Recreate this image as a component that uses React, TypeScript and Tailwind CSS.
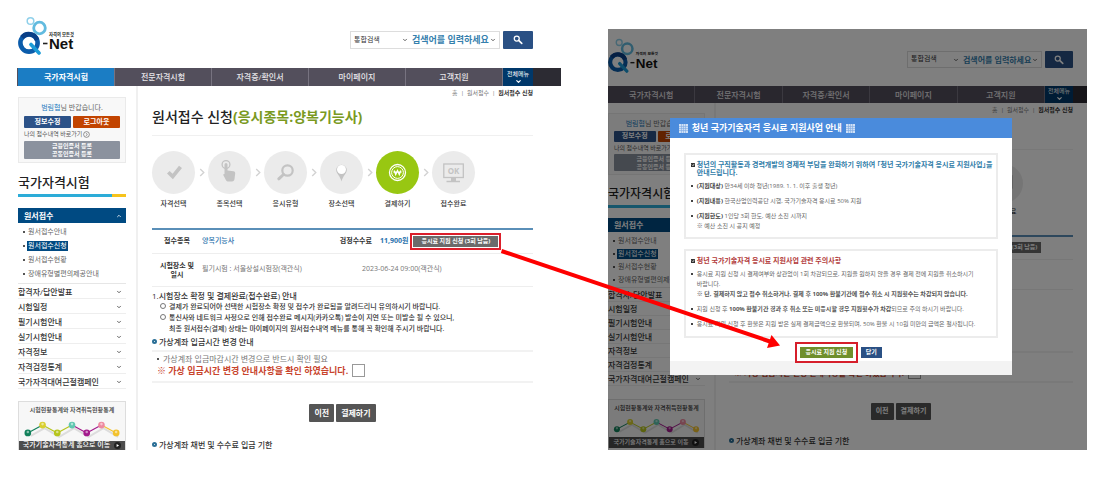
import type { ReactNode } from "react";
import { ChevronDown, ChevronUp } from "lucide-react";

const regular = {
  header: "h-[68px] pt-4 pr-7 pl-px",
  logo: "h-[39px] w-[58px]",
  search: "mt-[15px] h-[18px]",
  searchBox: "w-[150px]",
  searchSelect: "w-[54px]",
  searchInput: "text-[9px]",
  searchButton: "w-[30px]",
  nav: "h-[18px] pl-px",
  navAll: "w-[30px]",
  navRest: "w-7",
  body: "grid-cols-[121px_1fr]",
  side: "pl-px pr-[10px] pt-[11px]",
  userBox: "h-[66px] px-[5px] pt-[3px]",
  userName: "h-[15px] text-[7px]",
  userButtons: "h-3",
  userLink: "h-[13px]",
  cert: "h-[18px]",
  sideTitle: "mt-2 h-[23px] text-[13px]",
  menuHead: "mt-[11px] h-[15px]",
  subMenu: "py-[2px]",
  subItem: "h-[14px]",
  menuItem: "h-[15px] text-[8px]",
  banner: "mt-[12px]",
  bannerText: "h-[17px]",
  bannerChart: "h-[22px]",
  bannerBar: "h-[9px] text-[7px]",
  main: "pl-[14px] pr-7",
  crumb: "h-[14px]",
  title: "h-[36px] pb-[3px] text-[14px]",
  steps: "pt-[15px] gap-[13px]",
  circle: "size-[43px]",
  stepLabel: "mt-[5px]",
  table: "mt-[19px]",
  row1: "h-6",
  row2: "h-[33px]",
  th: "w-[50px]",
  th2: "w-[47px]",
  td2: "w-[153px]",
  feeButton: "px-2",
  date: "pl-[29px]",
  notes: "pt-[3px] leading-[11px] text-[7px]",
  subHead: "h-[18px]",
  confirm: "h-[31px] pt-[2px]",
  confirmLabel: "text-[9px]",
  actions: "mt-[21px] h-[18px] text-[8px]",
  bottom: "mt-[18px] h-[10px]",
};

type Sizes = typeof regular;

const compact: Sizes = {
  header: "h-[57px] pt-[9px] pr-[14px]",
  logo: "h-[35px] w-[52px]",
  search: "mt-[13px] h-[17px]",
  searchBox: "w-[135px]",
  searchSelect: "w-[48px]",
  searchInput: "text-[8px]",
  searchButton: "w-7",
  nav: "h-[17px]",
  navAll: "w-7",
  navRest: "w-[14px]",
  body: "grid-cols-[108px_1fr]",
  side: "pr-[9px] pt-[10px]",
  userBox: "h-[62px] px-[5px] pt-[3px]",
  userName: "h-[14px] text-[7px]",
  userButtons: "h-[11px]",
  userLink: "h-3",
  cert: "h-[17px]",
  sideTitle: "mt-[7px] h-[23px] text-[12px]",
  menuHead: "mt-[10px] h-[14px]",
  subMenu: "pt-[2px] pb-px",
  subItem: "h-[13px]",
  menuItem: "h-[14px] text-[8px]",
  banner: "mt-[13px]",
  bannerText: "h-[16px]",
  bannerChart: "h-[21px]",
  bannerBar: "h-[11px] text-[6px]",
  main: "pl-[13px] pr-[14px]",
  crumb: "h-[14px]",
  title: "h-[33px] pb-[3px] text-[13px]",
  steps: "pt-[14px] gap-3",
  circle: "size-[39px]",
  stepLabel: "mt-[4px]",
  table: "mt-[18px]",
  row1: "h-[23px]",
  row2: "h-[30px]",
  th: "w-[45px]",
  th2: "w-[42px]",
  td2: "w-[142px]",
  feeButton: "px-1",
  date: "pl-[26px]",
  notes: "pt-[4px] leading-[10px] text-[6px]",
  subHead: "h-[19px]",
  confirm: "h-[30px] pt-[3px]",
  confirmLabel: "text-[8px]",
  actions: "mt-[20px] h-[17px] text-[7px]",
  bottom: "mt-[12px] h-[18px]",
};

const navItems = ["국가자격시험", "전문자격시험", "자격증/확인서", "마이페이지", "고객지원"];
const subItems = ["원서접수안내", "원서접수신청", "원서접수현황", "장애유형별편의제공안내"];
const menuItems = [
  "합격자/답안발표",
  "시험일정",
  "필기시험안내",
  "실기시험안내",
  "자격정보",
  "자격검정통계",
  "국가자격대여근절캠페인",
];

function Logo({ className }: { className: string }) {
  return (
    <svg viewBox="0 0 58 39" className={className} role="img" aria-label="Q-Net">
      <circle cx="12.5" cy="5" r="3.3" fill="none" stroke="#8fd0ea" strokeWidth="1.5" />
      <circle cx="21.5" cy="12" r="5.8" fill="none" stroke="#62bbdf" strokeWidth="2.8" />
      <circle cx="11" cy="27" r="8.6" fill="none" stroke="#0b5cab" strokeWidth="4.6" />
      <path d="M4 21.5A8.6 8.6 0 0 1 19 24" fill="none" stroke="#0a3f86" strokeWidth="4.6" />
      <path d="M13 28.5L21 37" stroke="#1a9bd7" strokeWidth="3.6" strokeLinecap="round" />
      <path d="M25 27.500h4.500" stroke="#222" strokeWidth="1.600" />
      <text x="31" y="19.500" fontSize="4.300" fontWeight="700" fill="#222">
        자격의 모든것
      </text>
      <text x="31" y="33" fontSize="15" fontWeight="700" fill="#111" fontFamily="Liberation Sans, sans-serif">
        Net
      </text>
    </svg>
  );
}

function StepIcon({ index }: { index: number }) {
  const gray = "#c3c3c3";
  return (
    <svg viewBox="0 0 43 43" className="size-full" aria-hidden="true">
      {index === 0 && <path d="M15 22.500l2.600-2.600 3 2.800 6.400-8 3 2.300-9.100 11.200z" fill={gray} />}
      {index === 1 && (
        <>
          <circle cx="18" cy="13.500" r="3.900" fill="none" stroke={gray} strokeWidth="1.300" />
          <path
            d="M16.500 13.500a1.500 1.500 0 0 1 3 0v6l6 .8c1.300.2 1.800 1 1.700 2.200l-.7 5.500c-.2 1.500-1 2.500-2.500 2.500h-3.500c-1.200 0-2-.5-2.600-1.500l-2.400-4.500c-.5-1 .2-1.700 1-1.300z"
            fill={gray}
          />
        </>
      )}
      {index === 2 && (
        <>
          <circle cx="23.500" cy="19.500" r="5.200" fill="none" stroke={gray} strokeWidth="2.200" />
          <path d="M19.500 23.500L14.800 27.800" stroke={gray} strokeWidth="3" strokeLinecap="round" />
        </>
      )}
      {index === 3 && (
        <>
          <path d="M16.200 19a5.300 5.300 0 0 1 10.600 0c0 3.500-4 6-5.300 11.500-1.300-5.500-5.300-8-5.300-11.500z" fill={gray} />
          <circle cx="21.500" cy="18.500" r="4.500" fill="#fff" />
        </>
      )}
      {index === 4 && (
        <g fill="none" stroke="#fff">
          <circle cx="21.500" cy="21.500" r="8" strokeWidth="1.300" />
          <circle cx="21.500" cy="21.500" r="5.900" strokeWidth="1" />
          <path d="M18.200 19.500l1.500 4 1.800-4 1.800 4 1.500-4M17.500 21.200h8" strokeWidth="1.300" />
        </g>
      )}
      {index === 5 && (
        <>
          <rect x="11.800" y="13" width="19.500" height="13.500" fill="none" stroke={gray} strokeWidth="1.300" />
          <path d="M19 27h5v2.800h4v1.400H14.500v-1.400H19z" fill={gray} />
          <text x="21.500" y="22.800" fontSize="8" fontWeight="700" fill={gray} textAnchor="middle">
            OK
          </text>
        </>
      )}
    </svg>
  );
}

function SearchIcon() {
  return (
    <svg viewBox="0 0 12 12" className="size-[10px]" fill="none" stroke="#fff" aria-hidden="true">
      <circle cx="4.500" cy="4.300" r="3" strokeWidth="1.500" />
      <path d="M6.800 6.500L10.500 10" strokeWidth="2" strokeLinecap="round" />
    </svg>
  );
}

function Dot() {
  return <span className="size-[5px] shrink-0 rounded-full border-2 border-[#2b6f96] bg-white" />;
}

function Bullet() {
  return <span className="size-[2px] shrink-0 bg-[#555]" />;
}

const chartPoints = [
  [9, 14, "#11805a"],
  [24, 6, "#d9cf2e"],
  [39, 14, "#b6c51d"],
  [54, 6, "#5fc7b0"],
  [69, 14, "#a31a8c"],
  [84, 6, "#ee8aa0"],
  [99, 14, "#f3c22c"],
] as const;

function TrendChart({ className }: { className: string }) {
  return (
    <svg viewBox="0 0 108 22" className={className} aria-hidden="true">
      <path d="M12 17L26 9l15 9 15-9 15 9 15-9 15 9" fill="none" stroke="#ddd" strokeWidth="2" />
      {chartPoints.slice(1).map(([x, y, color], i) => (
        <line key={x} x1={chartPoints[i][0]} y1={chartPoints[i][1]} x2={x} y2={y} stroke={i % 2 ? color : chartPoints[i][2]} strokeWidth="1.200" />
      ))}
      {chartPoints.map(([x, y, color]) => (
        <g key={x}>
          <circle cx={x} cy={y} r="3.400" fill={color} />
          <circle cx={x} cy={y - 1} r="1.300" fill="#fff" opacity=".5" />
        </g>
      ))}
    </svg>
  );
}

function Sidebar({ s }: { s: Sizes }) {
  return (
    <aside className={`border-r-2 border-[#f0f0f0] ${s.side}`}>
      <section className={`border border-[#eaeaea] bg-[#f8f8f8] ${s.userBox}`}>
        <p className={`flex items-center justify-center text-[#666] ${s.userName}`}>
          <span className="text-[#2479bd]">범림협</span>님 반갑습니다.
        </p>
        <div className={`grid grid-cols-2 gap-[2px] text-[7px] font-bold text-white ${s.userButtons}`}>
          <button className="flex items-center justify-center rounded-[1px] bg-[#2c5288]">정보수정</button>
          <button className="flex items-center justify-center rounded-[1px] bg-[#c24400]">로그아웃</button>
        </div>
        <a href="#history" className={`flex items-center gap-px text-[6px] whitespace-nowrap text-[#555] ${s.userLink}`}>
          나의 접수내역 바로가기
          <svg viewBox="0 0 8 8" className="size-[7px]" fill="none" stroke="#666" strokeWidth=".8" aria-hidden="true">
            <circle cx="4" cy="4" r="3.300" />
            <path d="M3.200 2.400L5 4 3.200 5.600" />
          </svg>
        </a>
        <div className={`flex flex-col items-center justify-center rounded-[1px] bg-[#8b929e] text-[6px] leading-[8px] font-bold text-white ${s.cert}`}>
          <a href="#finance">금융인증서 등록</a>
          <a href="#joint">공동인증서 등록</a>
        </div>
      </section>
      <h2 className={`flex items-center font-medium whitespace-nowrap text-[#222] ${s.sideTitle}`}>국가자격시험</h2>
      <div className="grid h-[3px] grid-cols-[94fr_14fr]">
        <span className="bg-[#2cacd8]" />
        <span className="bg-[#f6c31c]" />
      </div>
      <button className={`flex w-full items-center justify-between bg-[#004a82] pr-1 pl-[6px] text-[8px] font-bold text-white ${s.menuHead}`}>
        원서접수
        <ChevronUp className="size-[6px]" strokeWidth={3} />
      </button>
      <ul className={`border-b border-[#e6e6e6] text-[7px] text-[#666] ${s.subMenu}`}>
        {subItems.map((item, i) => (
          <li key={item} className={`flex items-center gap-[2px] pl-[5px] whitespace-nowrap ${s.subItem}`}>
            <Bullet />
            <a href="#apply" className={i === 1 ? "bg-[#004a82] px-px leading-[10px] text-white" : "px-px leading-[10px]"}>
              {item}
            </a>
          </li>
        ))}
      </ul>
      <ul className="font-medium text-[#333]">
        {menuItems.map((item) => (
          <li key={item} className="border-b border-[#eee]">
            <a href="#menu" className={`-mb-px flex items-center justify-between pr-1 whitespace-nowrap ${s.menuItem}`}>
              {item}
              <ChevronDown className="size-[6px]" strokeWidth={3} />
            </a>
          </li>
        ))}
      </ul>
      <a href="#stats" className={`block overflow-hidden border border-b-0 border-[#ddd] bg-[#f7f7f7] ${s.banner}`}>
        <span className={`flex items-center justify-center text-[6px] font-medium whitespace-nowrap text-[#333] ${s.bannerText}`}>
          시험현황통계와 자격취득현황통계
        </span>
        <TrendChart className={`w-full ${s.bannerChart}`} />
        <span className={`flex items-center justify-center gap-1 overflow-hidden bg-[#4d4d4d] font-medium whitespace-nowrap text-white ${s.bannerBar}`}>
          국가기술자격통계 홈으로 이동
          <svg viewBox="0 0 8 8" className="size-[7px] shrink-0" aria-hidden="true">
            <circle cx="4" cy="4" r="4" fill="#222" />
            <path d="M3 2.200L5.800 4 3 5.800z" fill="#fff" />
          </svg>
        </span>
      </a>
    </aside>
  );
}

function SitePage({ s, active }: { s: Sizes; active: boolean }) {
  const steps = ["자격선택", "종목선택", "응시유형", "장소선택", "결제하기", "접수완료"];
  return (
    <div className="bg-white text-[7px] text-[#333]">
      <header className={`flex items-start justify-between ${s.header}`}>
        <Logo className={s.logo} />
        <form className={`flex gap-[3px] ${s.search}`} onSubmit={(e) => e.preventDefault()}>
          <div className={`flex items-center border border-[#ddd] px-[3px] ${s.searchBox}`}>
            <div className={`flex shrink-0 items-center ${s.searchSelect}`}>
              <select aria-label="검색 범위" className="min-w-0 flex-1 appearance-none bg-transparent text-[7px]">
                <option>통합검색</option>
              </select>
              <ChevronDown className="size-[6px] shrink-0" strokeWidth={3} />
            </div>
            <input
              aria-label="검색어"
              placeholder="검색어를 입력하세요"
              className={`ml-1 min-w-0 flex-1 bg-transparent font-bold placeholder:text-[#3580ad] ${s.searchInput}`}
            />
            <ChevronDown className="size-[6px] shrink-0" strokeWidth={3} />
          </div>
          <button aria-label="검색" className={`flex items-center justify-center rounded-[1px] bg-[#2a5084] ${s.searchButton}`}>
            <SearchIcon />
          </button>
        </form>
      </header>
      <nav className={`flex bg-[#534f5c] text-[8px] text-white ${s.nav}`}>
        {navItems.map((item, i) => (
          <a
            key={item}
            href="#nav"
            className={`flex flex-1 basis-0 items-center justify-center border-r border-[#777380] whitespace-nowrap ${active && i === 0 ? "bg-[#1b7dc4] font-bold" : "font-medium text-[#e8e6ea]"}`}
          >
            {item}
          </a>
        ))}
        <button className={`flex flex-col items-center justify-center bg-[#00386a] text-[6px] leading-[8px] whitespace-nowrap ${s.navAll}`}>
          전체메뉴
          <ChevronDown className="size-[7px]" strokeWidth={4} />
        </button>
        <span className={`bg-[#2c2b33] ${s.navRest}`} />
      </nav>
      <div className={`grid ${s.body}`}>
        <Sidebar s={s} />
        <main className={s.main}>
          <p className={`flex items-center justify-end gap-[3px] text-[6px] text-[#777] ${s.crumb}`}>
            <span>홈</span>|<span>원서접수</span>|<span className="font-bold text-[#333]">원서접수 신청</span>
          </p>
          <h1 className={`flex items-center border-b border-[#f0f0f0] font-medium whitespace-nowrap text-[#222] ${s.title}`}>
            <span>
              원서접수 신청<span className="font-bold text-[#7a9a1f]">(응시종목:양복기능사)</span>
            </span>
          </h1>
          <ol className={`flex ${s.steps}`}>
            {steps.map((step, i) => (
              <li key={step} className="relative text-center">
                <div className={`rounded-full ${i === 4 ? "bg-[#98c712]" : "bg-[#ebebeb]"} ${s.circle}`}>
                  <StepIcon index={i} />
                </div>
                {i < 5 && (
                  <svg viewBox="0 0 6 10" className="absolute top-[17px] -right-[10px] h-[9px] w-[6px]" fill="none" stroke="#d2d2d2" strokeWidth="1.500" aria-hidden="true">
                    <path d="M1 1l4 4-4 4" />
                  </svg>
                )}
                <p className={`leading-[10px] font-medium ${s.stepLabel}`}>{step}</p>
              </li>
            ))}
          </ol>
          <table className={`w-full table-fixed border-t-2 border-[#5a8fb8] ${s.table}`}>
            <tbody>
              <tr className={`border-b border-[#eee] ${s.row1}`}>
                <th className={`p-0 text-center ${s.th}`}>접수종목</th>
                <td className="p-0 font-medium text-[#2a72ad]">양복기능사</td>
                <th className={`p-0 pr-2 text-right ${s.th2}`}>검정수수료</th>
                <td className={`p-0 ${s.td2}`}>
                  <div className="flex items-center gap-[5px] whitespace-nowrap">
                    <span className="font-bold text-[#2a72ad]">11,900원</span>
                    <button
                      className={`h-[11px] bg-[#6b6b6b] text-[6px] leading-[11px] font-bold text-white ${s.feeButton} ${active ? "outline-2 outline-offset-1 outline-[#dc1f2b]" : ""}`}
                    >
                      응시료 지원 신청 (3회 남음)
                    </button>
                  </div>
                </td>
              </tr>
              <tr className={`border-b border-[#eee] text-[#777] ${s.row2}`}>
                <th className="p-0 px-1 text-center leading-[9px] text-[#333]">
                  시험장소 및
                  <br />
                  일시
                </th>
                <td className="p-0 whitespace-nowrap">필기시험 : 서울상설시험장(객관식)</td>
                <td colSpan={2} className={`p-0 whitespace-nowrap ${s.date}`}>
                  2023-06-24 09:00(객관식)
                </td>
              </tr>
            </tbody>
          </table>
          <section className={`font-medium whitespace-nowrap ${s.notes}`}>
            <h3 className="text-[8px] font-medium">1.시험장소 확정 및 결제완료(접수완료) 안내</h3>
            <ul className="pl-2">
              {[
                "결제가 완료되어야 선택한 시험장소 확정 및 접수가 완료됨을 알려드리니 유의하시기 바랍니다.",
                "통신사와 네트워크 사정으로 인해 접수완료 메시지(카카오톡) 발송이 지연 또는 미발송 될 수 있으니,",
              ].map((line) => (
                <li key={line} className="flex items-center gap-[3px]">
                  <span className="size-[6px] shrink-0 rounded-full border border-[#777]" />
                  {line}
                </li>
              ))}
              <li className="pl-[9px]">최종 원서접수(결제) 상태는 마이페이지의 원서접수내역 메뉴를 통해 꼭 확인해 주시기 바랍니다.</li>
            </ul>
          </section>
          <h3 className={`flex items-center gap-[2px] border-b-2 border-[#f2f2f2] text-[8px] font-medium ${s.subHead}`}>
            <Dot />
            가상계좌 입금시간 변경 안내
          </h3>
          <section className={`border-b-2 border-[#f2f2f2] pl-[5px] whitespace-nowrap ${s.confirm}`}>
            <p className="flex items-center gap-1 text-[8px] leading-[10px] text-[#777]">
              <Bullet />
              가상계좌 입금마감시간 변경으로 반드시 확인 필요
            </p>
            <label className={`flex h-[14px] items-center gap-1 font-bold text-[#c8442c] ${s.confirmLabel}`}>
              ※ 가상 입금시간 변경 안내사항을 확인 하였습니다.
              <input type="checkbox" className="size-[13px] appearance-none border border-[#999] bg-white checked:bg-[#2a5084]" />
            </label>
          </section>
          <div className={`flex justify-center gap-[2px] font-bold text-white ${s.actions}`}>
            <button className="rounded-[1px] bg-[#555] px-[5px]">이전</button>
            <button className="rounded-[1px] bg-[#555] px-[5px]">결제하기</button>
          </div>
          <h3 className={`flex items-center gap-[2px] text-[8px] leading-[10px] font-medium ${s.bottom}`}>
            <Dot />
            가상계좌 채번 및 수수료 입금 기한
          </h3>
        </main>
      </div>
    </div>
  );
}

function GridIcon() {
  return (
    <svg viewBox="0 0 9 9" className="size-[9px]" aria-hidden="true">
      <rect width="9" height="9" fill="#cfe0f6" />
      <path d="M0 2.500h9M0 4.500h9M0 6.500h9M2.500 0v9M4.500 0v9M6.500 0v9" stroke="#7eaae2" strokeWidth=".6" />
    </svg>
  );
}

function Item({ children, className }: { children: ReactNode; className: string }) {
  return (
    <li className={`flex gap-1 ${className}`}>
      <span className="mt-1 size-[2px] shrink-0 bg-[#444]" />
      <span>{children}</span>
    </li>
  );
}

function BoxTitle({ children, className }: { children: ReactNode; className: string }) {
  return (
    <h3 className={`flex gap-[2px] text-[7px] leading-[8px] font-bold whitespace-nowrap ${className}`}>
      <svg viewBox="0 0 5 5" className="mt-[2px] size-[4px] shrink-0" aria-hidden="true">
        <path d="M0 0h5v5H0z" fill="#333" />
        <path d="M1 2l1.500 1.500L4 1" fill="none" stroke="#fff" strokeWidth=".8" />
      </svg>
      <span>{children}</span>
    </h3>
  );
}

function SupportDialog() {
  return (
    <div role="dialog" aria-labelledby="support-title" className="absolute top-[89px] right-[15.700%] left-[12.900%] bg-white text-[6px] leading-[10px] text-[#666]">
      <h2 id="support-title" className="flex h-5 items-center gap-1 bg-[#4a8bdc] pl-[9px] text-[9px] font-bold whitespace-nowrap text-white">
        <GridIcon />
        청년 국가기술자격 응시료 지원사업 안내
        <GridIcon />
      </h2>
      <div className="px-[14px] pt-[15px]">
        <section className="h-[86px] border-2 border-[#ececec] px-[5px] pt-[6px]">
          <BoxTitle className="text-[#2f7ca8] [font-feature-settings:'halt']">
            청년의 구직활동과 경력개발의 경제적 부담을 완화하기 위하여 「청년 국가기술자격 응시료 지원사업」을
            <br />
            안내드립니다.
          </BoxTitle>
          <ul className="whitespace-nowrap">
            <Item className="mt-1">
              <b className="text-[#444]">(지원대상)</b> 만34세 이하 청년(1989. 1. 1. 이후 출생 청년)
            </Item>
            <Item className="mt-[5px]">
              <b className="text-[#444]">(지원내용)</b> 한국산업인력공단 시행, 국가기술자격 응시료 50% 지원
            </Item>
            <Item className="mt-[5px]">
              <b className="text-[#444]">(지원한도)</b> 1인당 3회 한도, 예산 소진 시까지
              <br />※ 예산 소진 시 공지 예정
            </Item>
          </ul>
        </section>
        <section className="mt-[10px] h-[89px] border-2 border-[#ececec] px-[5px] pt-[6px]">
          <BoxTitle className="text-[#b23a3a]">청년 국가기술자격 응시료 지원사업 관련 주의사항</BoxTitle>
          <ul className="whitespace-nowrap">
            <Item className="mt-1">
              응시료 지원 신청 시 결제여부와 상관없이 1회 차감되므로, 지원을 원하지 않을 경우 결제 전에 지원을 취소하시기
              <br />
              바랍니다.
              <br />
              <b className="text-[#555]">※ 단, 결제하지 않고 접수 취소하거나, 결제 후 100% 환불기간에 접수 취소 시 지원횟수는 차감되지 않습니다.</b>
            </Item>
            <Item className="mt-[5px]">
              지원 신청 후 <b className="text-[#555]">100% 환불기간 경과 후 취소 또는 미응시할 경우 지원횟수가 차감</b>되므로 주의 하시기 바랍니다.
            </Item>
            <Item className="mt-[5px]">응시료 지원 신청 후 환불은 지원 받은 실제 결제금액으로 환불되며, 50% 환불 시 10원 미만의 금액은 절사됩니다.</Item>
          </ul>
        </section>
        <div className="flex justify-center gap-2 pt-[9px] pb-[3px] text-[6px] font-bold text-white">
          <button className="h-[11px] w-[53px] bg-[#6f8f2c] leading-[11px] outline-2 outline-offset-3 outline-[#d61f2b]">
            응시료 지원 신청
          </button>
          <button className="h-[11px] w-[21px] bg-[#2a5084] leading-[11px]">닫기</button>
        </div>
      </div>
      <div className="h-[14px] bg-[#f3f3f3]" />
    </div>
  );
}

export default function App() {
  return (
    <div className="relative min-h-screen bg-white font-['Open_Sans','Noto_Sans_CJK_KR',sans-serif]">
      <div className="grid grid-cols-[544fr_479fr] items-start gap-[47px] pr-[22px] pl-[17px]">
        <SitePage s={regular} active />
        <div className="relative mt-[29px]">
          <SitePage s={compact} active={false} />
          <div className="absolute inset-0 bg-black/50" />
          <SupportDialog />
        </div>
      </div>
      <svg viewBox="0 0 1109 479" className="pointer-events-none absolute inset-x-0 top-0 w-full" aria-hidden="true">
        <path d="M501.500 251L770 341.500" stroke="#fe0000" strokeWidth="4" />
        <path d="M780 345.500L771.500 335 767 348z" fill="#fe0000" />
      </svg>
    </div>
  );
}
